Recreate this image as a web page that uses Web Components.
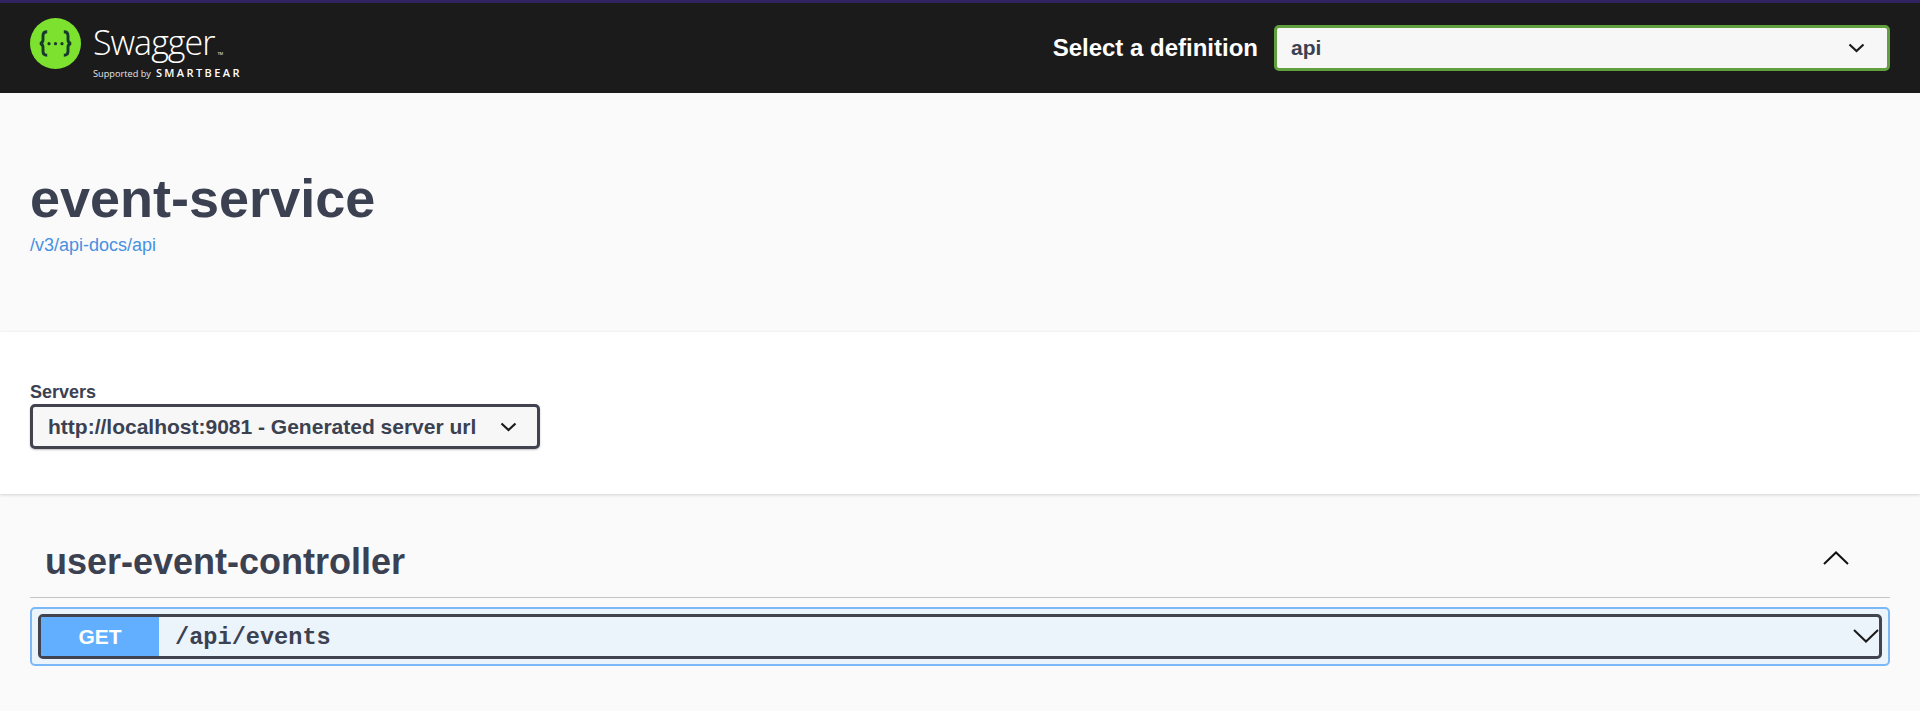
<!DOCTYPE html>
<html lang="en">
<head>
<meta charset="utf-8">
<title>Swagger UI</title>
<style>
  html, body { margin: 0; padding: 0; background: #fafafa; }
  body { font-family: "Liberation Sans", Arial, sans-serif; color: #3b4151; height: 711px; overflow: hidden; }
</style>
</head>
<body>
<swagger-topbar>
  <swagger-select slot="select" variant="topbar" label="api"></swagger-select>
</swagger-topbar>
<api-info name="event-service" href="/v3/api-docs/api"></api-info>
<server-panel>
  <swagger-select variant="server" label="http://localhost:9081 - Generated server url"></swagger-select>
</server-panel>
<tag-section name="user-event-controller">
  <op-block method="GET" path="/api/events"></op-block>
</tag-section>

<script>
  const CHEVRON = `<svg viewBox="0 0 17 10" aria-hidden="true"><path d="M1.5 1.5 8.5 8 15.5 1.5" fill="none" stroke="currentColor" stroke-width="2.2"/></svg>`;

  class SwaggerTopbar extends HTMLElement {
    constructor() {
      super();
      this.attachShadow({ mode: 'open' });
      this.shadowRoot.innerHTML = `
        <style>
          :host {
            display: flex;
            align-items: center;
            justify-content: space-between;
            box-sizing: border-box;
            height: 93px;
            padding: 0 30px;
            background: #1b1b1b;
            border-top: 3px solid #2f2460;
          }
          .logo { display: flex; align-items: flex-start; gap: 12px; align-self: flex-start; }
          .mark { width: 51px; height: 51px; display: block; margin-top: 15px; }
          .words { display: flex; flex-direction: column; color: #fff; margin-top: 22px; }
          .name {
            font: 300 34px/34px "Open Sans", sans-serif;
            letter-spacing: -1px;
          }
          .name small { font: 400 4px/1 "Open Sans", sans-serif; letter-spacing: 0; margin-left: 3px; }
          .by {
            display: flex;
            align-items: baseline;
            gap: 5px;
            font: 400 9.2px/12px "Open Sans", sans-serif;
            color: #e4e4e4;
            margin-top: 8px;
          }
          .by b { font: 600 11px/12px "Open Sans", sans-serif; letter-spacing: 2.4px; color: #fff; }
          .pick { display: flex; align-items: center; gap: 16px; }
          .pick span { font-weight: 700; font-size: 24px; color: #fff; }
        </style>
        <div class="logo">
          <svg class="mark" viewBox="0 0 51 51" aria-hidden="true">
            <circle cx="25.5" cy="25.5" r="25.5" fill="#7ce12f"/>
            <path d="M17.2 13.8c-3.2 0-4.2 1.3-4.2 4v4c0 2.2-1 3.3-3 3.7 2 .4 3 1.5 3 3.7v4c0 2.7 1 4 4.2 4M33.8 13.8c3.2 0 4.2 1.3 4.2 4v4c0 2.2 1 3.3 3 3.7-2 .4-3 1.5-3 3.7v4c0 2.7-1 4-4.2 4" fill="none" stroke="#173a2c" stroke-width="2.9"/>
            <circle cx="19" cy="25.7" r="1.6" fill="#173a2c"/>
            <circle cx="25.5" cy="25.7" r="1.6" fill="#173a2c"/>
            <circle cx="32" cy="25.7" r="1.6" fill="#173a2c"/>
          </svg>
          <div class="words">
            <div class="name">Swagger<small>TM</small></div>
            <div class="by">Supported by <b>SMARTBEAR</b></div>
          </div>
        </div>
        <div class="pick">
          <span>Select a definition</span>
          <slot name="select"></slot>
        </div>`;
    }
  }
  customElements.define('swagger-topbar', SwaggerTopbar);

  class SwaggerSelect extends HTMLElement {
    constructor() {
      super();
      this.attachShadow({ mode: 'open' });
      this.shadowRoot.innerHTML = `
        <style>
          :host {
            display: flex;
            align-items: center;
            justify-content: space-between;
            box-sizing: border-box;
            font-weight: 700;
            font-size: 21px;
            color: #3b4151;
            background: #f7f7f7;
            border-radius: 5px;
          }
          :host([variant="topbar"]) {
            width: 616px;
            height: 46px;
            padding: 0 22px 0 14px;
            border: 3px solid #62a03f;
          }
          :host([variant="server"]) {
            width: 510px;
            height: 45px;
            padding: 0 20px 0 15px;
            border: 3px solid #41444e;
            box-shadow: 0 1px 2px 0 rgba(0, 0, 0, 0.25);
          }
          svg { width: 17px; height: 10px; display: block; color: #1b1b1b; }
        </style>
        <span class="label"></span>${CHEVRON}`;
    }

    connectedCallback() {
      this.shadowRoot.querySelector('.label').textContent = this.getAttribute('label');
    }
  }
  customElements.define('swagger-select', SwaggerSelect);

  class ApiInfo extends HTMLElement {
    constructor() {
      super();
      this.attachShadow({ mode: 'open' });
      this.shadowRoot.innerHTML = `
        <style>
          :host {
            display: block;
            box-sizing: border-box;
            height: 239px;
            padding: 75px 30px 0;
            background: #fafafa;
          }
          h1 {
            margin: 0;
            font-size: 54px;
            line-height: 60px;
            font-weight: 700;
            color: #3b4151;
          }
          a {
            display: block;
            margin-top: 7px;
            font-size: 18px;
            line-height: 20px;
            color: #4990e2;
            text-decoration: none;
          }
        </style>
        <h1></h1>
        <a></a>`;
    }

    connectedCallback() {
      this.shadowRoot.querySelector('h1').textContent = this.getAttribute('name');
      const link = this.shadowRoot.querySelector('a');
      link.textContent = this.getAttribute('href');
      link.href = this.getAttribute('href');
    }
  }
  customElements.define('api-info', ApiInfo);

  class ServerPanel extends HTMLElement {
    constructor() {
      super();
      this.attachShadow({ mode: 'open' });
      this.shadowRoot.innerHTML = `
        <style>
          :host {
            display: block;
            box-sizing: border-box;
            height: 162px;
            padding: 49px 30px 0;
            background: #fff;
            box-shadow: 0 1px 3px 0 rgba(0, 0, 0, 0.16);
            position: relative;
          }
          .title {
            font-size: 18px;
            line-height: 22px;
            margin-bottom: 1px;
            font-weight: 700;
            color: #3b4151;
          }
        </style>
        <div class="title">Servers</div>
        <slot></slot>`;
    }
  }
  customElements.define('server-panel', ServerPanel);

  class TagSection extends HTMLElement {
    constructor() {
      super();
      this.attachShadow({ mode: 'open' });
      this.shadowRoot.innerHTML = `
        <style>
          :host { display: block; padding: 0 30px; }
          .head {
            display: flex;
            align-items: center;
            justify-content: space-between;
            box-sizing: border-box;
            height: 104px;
            padding: 32px 41px 0 15px;
            border-bottom: 1px solid #c4c4c8;
          }
          h3 { margin: 0; font-size: 36px; font-weight: 700; color: #3b4151; }
          svg { width: 26px; height: 14px; display: block; margin-top: -7px; }
          .body { margin-top: 9px; }
        </style>
        <div class="head">
          <h3></h3>
          <svg viewBox="0 0 26 14" aria-hidden="true"><path d="M1 13 13 1.5 25 13" fill="none" stroke="#111" stroke-width="2"/></svg>
        </div>
        <div class="body"><slot></slot></div>`;
    }

    connectedCallback() {
      this.shadowRoot.querySelector('h3').textContent = this.getAttribute('name');
    }
  }
  customElements.define('tag-section', TagSection);

  class OpBlock extends HTMLElement {
    constructor() {
      super();
      this.attachShadow({ mode: 'open' });
      this.shadowRoot.innerHTML = `
        <style>
          :host {
            display: block;
            box-sizing: border-box;
            height: 59px;
            padding: 5px 6px;
            background: #ebf3fb;
            border: 2px solid #7ab8f8;
            border-radius: 5px;
          }
          .row {
            display: flex;
            align-items: center;
            box-sizing: border-box;
            height: 45px;
            border: 3px solid #41444e;
            border-radius: 5px;
          }
          .method {
            width: 118px;
            height: 100%;
            display: flex;
            align-items: center;
            justify-content: center;
            background: #61affe;
            font-size: 21px;
            font-weight: 700;
            color: #fff;
            border-radius: 2px 0 0 2px;
          }
          .path {
            flex: 1;
            margin-left: 16px;
            padding-top: 1px;
            font-family: "Liberation Mono", monospace;
            font-size: 23.6px;
            font-weight: 700;
            color: #3b4151;
          }
          svg { width: 26px; height: 14px; display: block; flex: none; margin: 0 0 1px; }
        </style>
        <div class="row">
          <div class="method"></div>
          <div class="path"></div>
          <svg viewBox="0 0 26 14" aria-hidden="true"><path d="M1 1 13 12.5 25 1" fill="none" stroke="#1a1a1a" stroke-width="2"/></svg>
        </div>`;
    }

    connectedCallback() {
      this.shadowRoot.querySelector('.method').textContent = this.getAttribute('method');
      this.shadowRoot.querySelector('.path').textContent = this.getAttribute('path');
    }
  }
  customElements.define('op-block', OpBlock);
</script>
</body>
</html>
